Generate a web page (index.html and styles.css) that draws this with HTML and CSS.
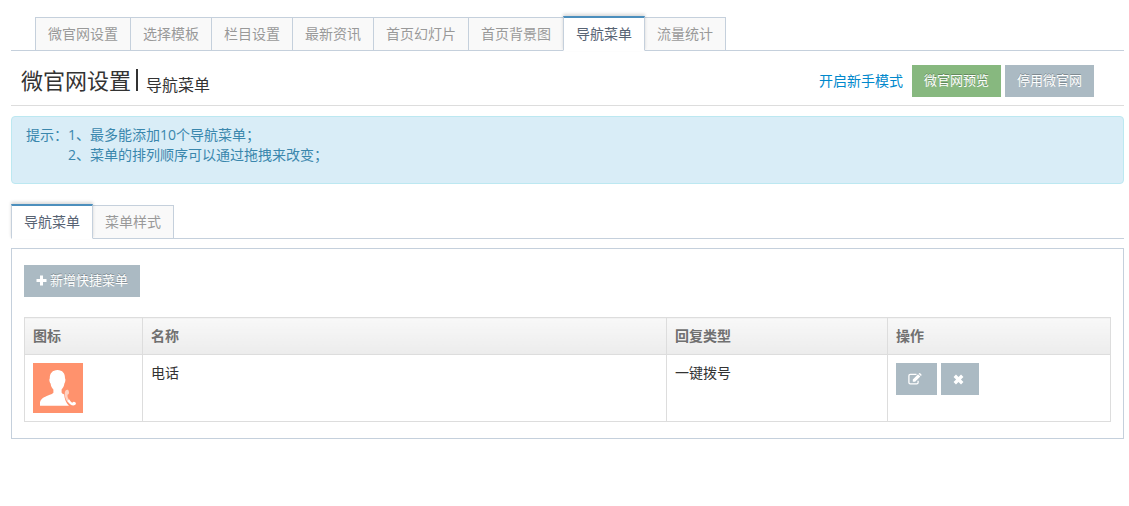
FILE: index.html
```html
<!DOCTYPE html>
<html lang="zh-CN">
<head>
    <meta charset="UTF-8">
    <meta name="viewport" content="width=device-width, initial-scale=1.0">
    <title>微官网设置 - 导航菜单</title>
    <link rel="stylesheet" href="styles.css">
</head>
<body>
    <div class="container">
        <ul class="nav-tabs nav-main">
            <li><a href="#">微官网设置</a></li>
            <li><a href="#">选择模板</a></li>
            <li><a href="#">栏目设置</a></li>
            <li><a href="#">最新资讯</a></li>
            <li><a href="#">首页幻灯片</a></li>
            <li><a href="#">首页背景图</a></li>
            <li class="active"><a href="#">导航菜单</a></li>
            <li><a href="#">流量统计</a></li>
        </ul>

        <div class="title-bar">
            <h1>微官网设置<span class="divider"></span><small>导航菜单</small></h1>
            <div class="actions">
                <a href="#" class="guide-link">开启新手模式</a>
                <button type="button" class="btn btn-success">微官网预览</button>
                <button type="button" class="btn">停用微官网</button>
            </div>
        </div>

        <div class="alert">
            <span>提示：</span>
            <div>
                <div>1、最多能添加10个导航菜单；</div>
                <div>2、菜单的排列顺序可以通过拖拽来改变；</div>
            </div>
        </div>

        <ul class="nav-tabs">
            <li class="active"><a href="#">导航菜单</a></li>
            <li><a href="#">菜单样式</a></li>
        </ul>

        <div class="panel">
            <button type="button" class="btn">
                <svg class="icon" width="11" height="11" viewBox="0 0 11 11"><path d="M4 0.5h3V4h3.500v3H7v3.500H4V7H0.500V4H4z"/></svg>
                新增快捷菜单
            </button>

            <table class="table">
                <colgroup>
                    <col class="col-icon">
                    <col>
                    <col class="col-type">
                    <col class="col-action">
                </colgroup>
                <thead>
                    <tr>
                        <th>图标</th>
                        <th>名称</th>
                        <th>回复类型</th>
                        <th>操作</th>
                    </tr>
                </thead>
                <tbody>
                    <tr>
                        <td>
                            <svg class="menu-icon" width="50" height="50" viewBox="0 0 50 50">
                                <rect width="50" height="50" fill="#ff926d"/>
                                <path fill="#fff" d="M24.500 7C29.500 7 32.200 10.500 32 15.500C32.800 16 32.400 19.500 31.400 20.500C31 23.500 30 25 28.600 26.500V29.500C29 30.500 30 31 31.200 31.500C31.500 36 33 40 36 42.700H7V39.500C7.500 35.500 11.500 34 15 32.500C17.500 31.400 19.500 31 20.400 29.800V26.500C18.800 25 18 23.500 17.600 20.500C16.500 19.500 16 16 16.800 15.500C16.600 10.500 19.500 7 24.500 7Z"/>
                                <path fill="#ffd2c2" d="M32.600 27.400C34 26.300 35.400 26.700 35.800 28.200C36.300 30 36 31.200 34.500 31.800C34.300 33.700 35 35.800 36.600 37.200L34.600 38.800C31.800 35.500 31 29.500 32.600 27.400Z"/>
                                <path fill="#fff" d="M34.300 38L36.200 36.600C37.200 38.200 38.200 39.400 39.300 39.700C40.200 38.300 41.400 38.400 42.500 39.500C43.300 40.600 42.900 41.500 41.900 42.100C39.500 43.300 36.300 41.300 34.300 38Z"/>
                            </svg>
                        </td>
                        <td>电话</td>
                        <td>一键拨号</td>
                        <td>
                            <div class="row-actions">
                                <button type="button" class="btn btn-edit" aria-label="编辑">
                                    <svg class="icon" width="14" height="12" viewBox="0 0 14 12">
                                        <path class="line" d="M8.500 1.300H2.300Q0.900 1.300 0.900 2.700V9.500Q0.900 10.900 2.300 10.900H8.700Q10.100 10.900 10.100 9.500V7.800"/>
                                        <path d="M4.800 8.800V6.500L10 1.300L12.300 3.600L7.100 8.800ZM10.600 0.700L11.200 0.200Q11.700-0.200 12.200 0.200L13.400 1.400Q13.800 1.900 13.400 2.400L12.900 3Z"/>
                                    </svg>
                                </button>
                                <button type="button" class="btn btn-remove" aria-label="删除">
                                    <svg class="icon" width="11" height="11" viewBox="0 0 10 10"><path d="M2.700 0.500L5 2.800L7.300 0.500L9.500 2.700L7.200 5L9.500 7.300L7.300 9.500L5 7.200L2.700 9.500L0.500 7.300L2.800 5L0.500 2.700Z"/></svg>
                                </button>
                            </div>
                        </td>
                    </tr>
                </tbody>
            </table>
        </div>
    </div>
</body>
</html>
```

FILE: styles.css
```css
* {
    box-sizing: border-box;
}
body {
    margin: 0;
    background: #fff;
    color: #333;
    font-family: "Open Sans", "Noto Sans CJK SC", sans-serif;
    font-size: 14px;
    line-height: 20px;
}
.container {
    padding: 16px 5px 0 11px;
}

/* tabs */
.nav-tabs {
    display: flex;
    margin: 0;
    padding: 0;
    list-style: none;
    border-bottom: 1px solid #c5d0dc;
}
.nav-main {
    padding-left: 24px;
}
.nav-tabs li {
    margin: 0 -1px -1px 0;
}
.nav-tabs a {
    display: block;
    height: 34px;
    margin-top: 1px;
    padding: 6px 12px;
    border: 1px solid #c5d0dc;
    background: #f9f9f9;
    color: #999;
    text-decoration: none;
}
.nav-tabs .active {
    position: relative;
    z-index: 1;
}
.nav-tabs .active a {
    height: 35px;
    margin-top: 0;
    border-top: 2px solid #4c8fbd;
    border-bottom-color: #fff;
    background: #fff;
    color: #576373;
    box-shadow: 0 -2px 3px 0 rgba(0,0,0,0.15);
}

/* title */
.title-bar {
    display: flex;
    justify-content: space-between;
    align-items: center;
    height: 55px;
    padding: 6px 30px 0 10px;
    border-bottom: 1px solid #ddd;
}
.title-bar h1 {
    display: flex;
    align-items: flex-end;
    margin: 0;
    padding-bottom: 2px;
    font-size: 22px;
    font-weight: normal;
    line-height: 30px;
}
.title-bar small {
    font-size: 16px;
    line-height: 20px;
}
.divider {
    align-self: center;
    height: 22px;
    margin: 0 8px 0 5px;
    border-left: 2px solid #333;
}
.actions {
    display: flex;
    align-items: center;
    gap: 4px;
}
.guide-link {
    margin-right: 5px;
    color: #08c;
    text-decoration: none;
}
.btn {
    display: inline-flex;
    align-items: center;
    gap: 3px;
    height: 32px;
    padding: 0 12px 2px;
    border: 0;
    background: #abbac3;
    color: #fff;
    font-family: inherit;
    font-size: 13px;
    line-height: 20px;
    text-shadow: 0 -1px 0 rgba(0,0,0,0.25);
    cursor: pointer;
}
.btn-success {
    background: #87b87f;
}
.icon {
    fill: #fff;
}
.icon .line {
    fill: none;
    stroke: #fff;
    stroke-width: 1.3;
}

/* tips */
.alert {
    display: flex;
    margin: 10px 0 20px;
    padding: 8px 14px 18px;
    border: 1px solid #bce8f1;
    border-radius: 4px;
    background: #d9edf7;
    color: #3a87ad;
}

/* content */
.panel {
    margin-top: 9px;
    padding: 16px 12px;
    border: 1px solid #c5d0dc;
}
.table {
    width: 100%;
    margin-top: 20px;
    border-collapse: collapse;
    table-layout: fixed;
}
.table th,
.table td {
    padding: 8px;
    border: 1px solid #ddd;
    text-align: left;
    vertical-align: top;
}
.table th {
    background: linear-gradient(#f8f8f8, #ececec);
    color: #707070;
}
.col-icon {
    width: 118px;
}
.col-type {
    width: 221px;
}
.col-action {
    width: 223px;
}
.menu-icon {
    display: block;
}
.row-actions {
    display: flex;
    gap: 4px;
}
.row-actions .btn {
    padding-bottom: 0;
}
.btn-edit {
    padding-right: 15px;
}
.btn-remove {
    padding-right: 15px;
}
```
